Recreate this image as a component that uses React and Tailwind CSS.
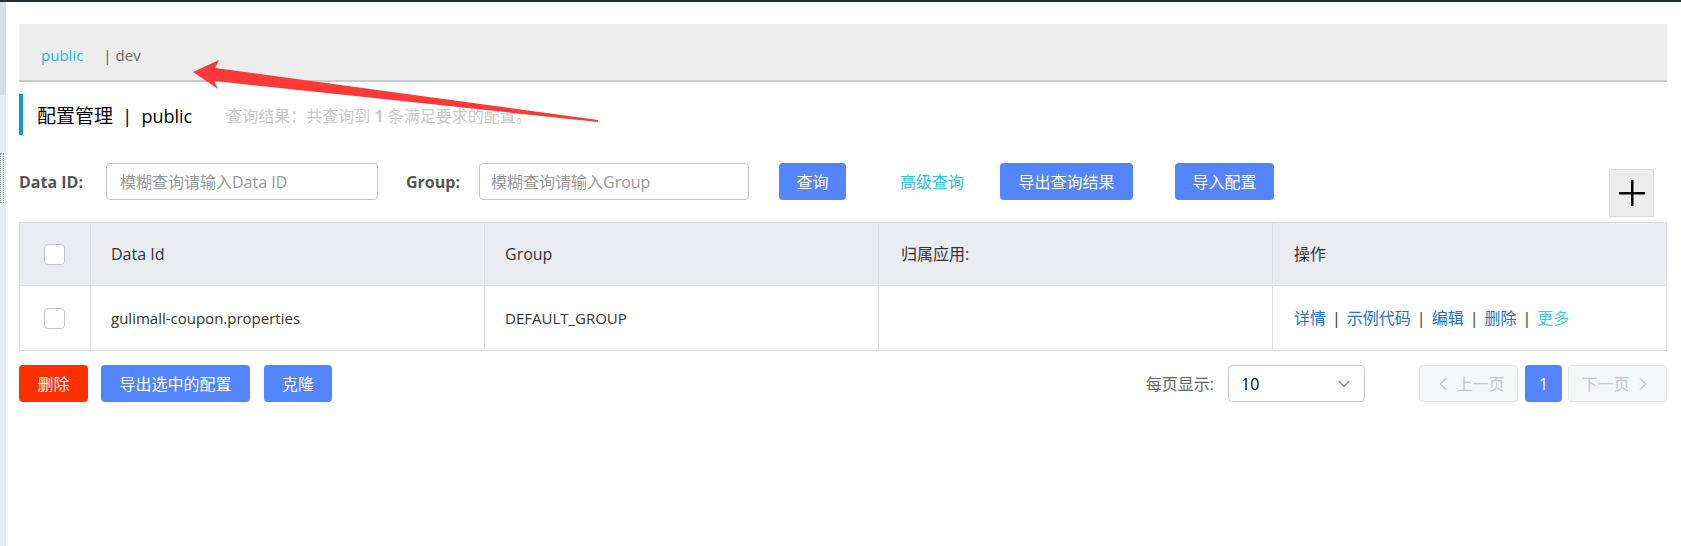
import { ChevronDown, ChevronLeft, ChevronRight } from 'lucide-react'

const FONT = { fontFamily: '"Open Sans", "Noto Sans CJK SC", sans-serif' }

const ROWS = [{ id: 'gulimall-coupon.properties', group: 'DEFAULT_GROUP', app: '' }]

function Checkbox() {
  return <div className="w-[21px] h-[21px] rounded-[4px] border border-[#c4c6cf] bg-white" />
}

function Btn({ children, className = '' }) {
  return (
    <button className={`h-[37px] rounded-[4px] text-[16px] text-white bg-[#5584ff] ${className}`}>
      {children}
    </button>
  )
}

function RedArrow() {
  return (
    <svg className="absolute left-0 top-0 pointer-events-none" width="620" height="140">
      <polygon points="193,72 219,60 215,68 598,120 598,122 214,81 218,89" fill="#ff3838" />
    </svg>
  )
}

export default function App() {
  return (
    <div className="relative w-[1681px] h-[546px] bg-white overflow-hidden text-[#333]" style={FONT}>
      <div className="h-[2px] bg-[#2a2d2f]" />
      <div className="flex h-[544px]">
        {/* left strip */}
        <div className="w-[6px] flex flex-col">
          <div className="h-[93px] bg-[#d9dde4]" />
          <div className="flex-1 bg-[#e8ebf0] relative">
            <div className="absolute left-0 top-[58px] w-[4px] h-[50px] border border-dotted border-[#999]" />
          </div>
        </div>

        <div className="flex-1 pl-[13px] pr-[14px] pt-[22px]">
          {/* namespace tabs */}
          <div className="h-[58px] bg-[#ededed] border-b-[2px] border-[#cbcbcb] flex items-center pl-[22px] pt-[6px] text-[15px]">
            <span className="text-[#22b8e0]">public</span>
            <span className="ml-[20px] text-[#555]">|</span>
            <span className="ml-[4px] text-[#666]">dev</span>
          </div>

          {/* title */}
          <div className="mt-[12px] h-[41px] border-l-[4px] border-[#1299d2] flex items-center pl-[14px] pt-[3px]">
            <span className="text-[19px] text-black">配置管理</span>
            <span className="text-[19px] text-black mx-[9px]">|</span>
            <span className="text-[18px] text-black">public</span>
            <span className="ml-[34px] text-[16px] text-[#c8c8c8]">
              查询结果：共查询到 <b className="font-bold">1</b> 条满足要求的配置。
            </span>
          </div>

          {/* search */}
          <div className="mt-[28px] h-[59px] flex items-start">
            <div className="w-[87px] h-[37px] flex items-center text-[16px] font-bold text-[#555]">Data ID:</div>
            <input
              className="w-[272px] h-[37px] border border-[#c4c6cf] rounded-[4px] px-[13px] text-[16px] placeholder-[#999] outline-none"
              placeholder="模糊查询请输入Data ID"
            />
            <div className="ml-[28px] w-[73px] h-[37px] flex items-center text-[16px] font-bold text-[#555]">Group:</div>
            <input
              className="w-[270px] h-[37px] border border-[#c4c6cf] rounded-[4px] px-[11px] text-[16px] placeholder-[#999] outline-none"
              placeholder="模糊查询请输入Group"
            />
            <Btn className="ml-[30px] w-[67px]">查询</Btn>
            <div className="ml-[54px] w-[66px] h-[37px] flex items-center text-[16px] text-[#33c2dc] whitespace-nowrap">高级查询</div>
            <Btn className="ml-[34px] w-[133px]">导出查询结果</Btn>
            <Btn className="ml-[42px] w-[99px]">导入配置</Btn>
            <div className="ml-auto mr-[13px] mt-[6px] w-[45px] h-[48px] bg-[#ececec] border border-[#d9d9d9] flex items-center justify-center">
              <svg width="28" height="28" viewBox="0 0 28 28">
                <rect x="13" y="1" width="2.5" height="26" fill="#000" />
                <rect x="1" y="13" width="26" height="2.5" fill="#000" />
              </svg>
            </div>
          </div>

          {/* table */}
          <div className="border border-[#dcdee3] text-[16px]">
            <div className="grid grid-cols-[70px_1fr_1fr_1fr_1fr] h-[63px] bg-[#ebecf0] border-b border-[#dcdee3]">
              <div className="flex items-center justify-center pr-[2px]"><Checkbox /></div>
              <div className="border-l border-[#dcdee3] flex items-center pl-[20px]">Data Id</div>
              <div className="border-l border-[#dcdee3] flex items-center pl-[20px]">Group</div>
              <div className="border-l border-[#dcdee3] flex items-center pl-[22px]">归属应用:</div>
              <div className="border-l border-[#dcdee3] flex items-center pl-[21px]">操作</div>
            </div>
            {ROWS.map((r) => (
              <div key={r.id} className="grid grid-cols-[70px_1fr_1fr_1fr_1fr] h-[64px] bg-white">
                <div className="flex items-center justify-center pr-[2px]"><Checkbox /></div>
                <div className="border-l border-[#dcdee3] flex items-center pl-[20px] text-[15px]">{r.id}</div>
                <div className="border-l border-[#dcdee3] flex items-center pl-[20px] text-[15px]">{r.group}</div>
                <div className="border-l border-[#dcdee3] flex items-center pl-[22px]">{r.app}</div>
                <div className="border-l border-[#dcdee3] flex items-center pl-[21px] gap-[6px]">
                  <span className="text-[#1f6fd6]">详情</span>
                  <span className="text-[#333]">|</span>
                  <span className="text-[#1f6fd6]">示例代码</span>
                  <span className="text-[#333]">|</span>
                  <span className="text-[#1f6fd6]">编辑</span>
                  <span className="text-[#333]">|</span>
                  <span className="text-[#1f6fd6]">删除</span>
                  <span className="text-[#333]">|</span>
                  <span className="text-[#3ccbe0]">更多</span>
                </div>
              </div>
            ))}
          </div>

          {/* footer */}
          <div className="mt-[14px] flex items-center">
            <button className="h-[37px] w-[69px] rounded-[4px] bg-[#ff3000] text-white text-[16px]">删除</button>
            <Btn className="ml-[13px] w-[149px]">导出选中的配置</Btn>
            <Btn className="ml-[14px] w-[68px]">克隆</Btn>
            <div className="ml-auto text-[16px] text-[#666]">每页显示:</div>
            <div className="ml-[14px] w-[137px] h-[37px] border border-[#c4c6cf] rounded-[4px] flex items-center justify-between pl-[12px] pr-[10px] text-[16px] text-black">
              <span>10</span>
              <ChevronDown className="w-[20px] h-[20px] text-[#888]" strokeWidth={1.5} />
            </div>
            <div className="ml-[54px] w-[99px] h-[37px] rounded-[4px] border border-[#e3e4e8] bg-[#f5f6f8] flex items-center justify-center gap-[2px] text-[16px] text-[#c4c6cf]">
              <ChevronLeft className="w-[22px] h-[22px]" strokeWidth={1.5} />
              上一页
            </div>
            <div className="ml-[7px] w-[37px] h-[37px] rounded-[4px] bg-[#5584ff] text-white text-[16px] flex items-center justify-center">1</div>
            <div className="ml-[6px] w-[99px] h-[37px] rounded-[4px] border border-[#e3e4e8] bg-[#f5f6f8] flex items-center justify-center gap-[2px] text-[16px] text-[#c4c6cf]">
              下一页
              <ChevronRight className="w-[22px] h-[22px]" strokeWidth={1.5} />
            </div>
          </div>
        </div>
      </div>
      <RedArrow />
    </div>
  )
}
